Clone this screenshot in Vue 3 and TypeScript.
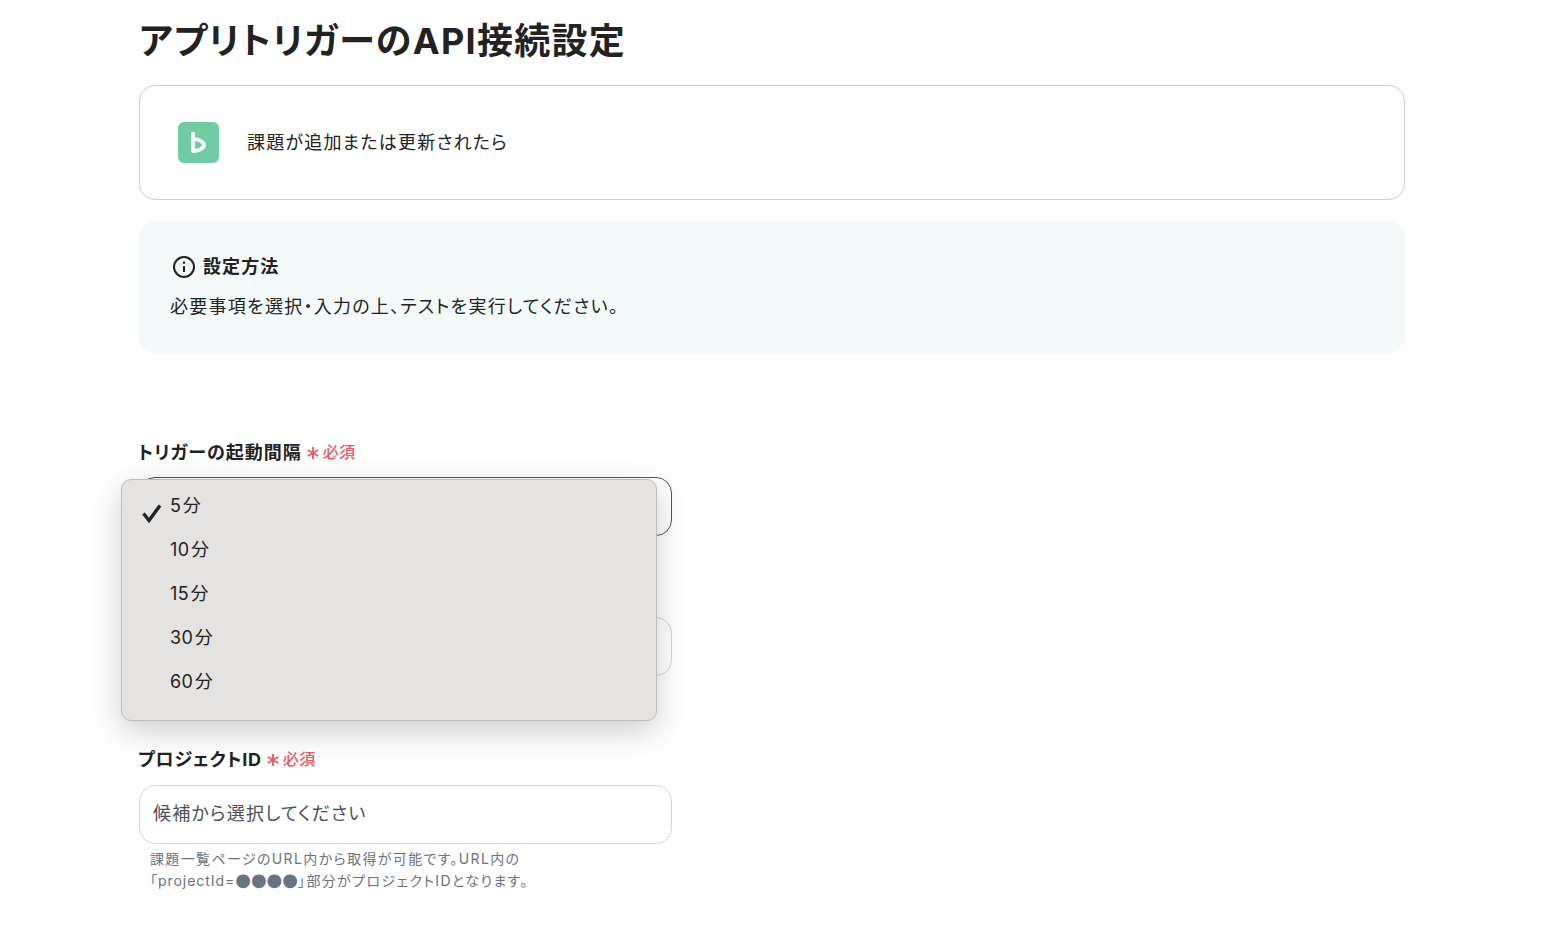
<script setup lang="ts">
const options: string[] = ['5 分', '10 分', '15 分', '30 分', '60 分']
</script>

<template>
  <main class="page">
    <h1 class="title">アプリトリガーのAPI接続設定</h1>

    <section class="app-card">
      <svg class="logo" viewBox="0 0 41 41" width="41" height="41" aria-hidden="true">
        <rect width="41" height="41" rx="6" fill="#6fcca3" />
        <path d="M15 10V29C20.5 29 25.5 26.5 26 23 25.5 19.5 20.5 17 15 17" fill="none" stroke="#fff" stroke-width="3.8" stroke-linejoin="round" />
      </svg>
      <span class="app-text">課題が追加または更新されたら</span>
    </section>

    <section class="note">
      <div class="note-head">
        <svg viewBox="0 0 24 24" width="24" height="24" fill="none" aria-hidden="true">
          <circle cx="12" cy="12" r="10" stroke="#222" stroke-width="2" />
          <path d="M12 11v6" stroke="#222" stroke-width="2" />
          <circle cx="12" cy="7.8" r="1.2" fill="#222" />
        </svg>
        <strong>設定方法</strong>
      </div>
      <p class="note-body">必要事項を選択・入力の上、テストを実行してください。</p>
    </section>

    <div class="field first">
      <label class="label">トリガーの起動間隔<span class="req"><svg viewBox="0 0 14 14" width="14" height="14" aria-hidden="true"><path d="M7 1v12M1.8 4 12.2 10M12.2 4 1.8 10" stroke="#ef5a64" stroke-width="1.9" /></svg>必須</span></label>
      <div class="dropdown-wrap">
        <div class="input focused"></div>
        <ul class="menu">
          <li v-for="(opt, i) in options" :key="opt">
            <svg v-if="i === 0" class="check" viewBox="0 0 22 22" width="22" height="22" aria-hidden="true">
              <path d="M2.5 11.5 8 18.5 19 3.5" fill="none" stroke="#222" stroke-width="3.4" />
            </svg>
            {{ opt }}
          </li>
        </ul>
      </div>
    </div>

    <div class="field second">
      <label class="label">&nbsp;</label>
      <div class="input"></div>
    </div>

    <div class="field third">
      <label class="label">プロジェクトID<span class="req"><svg viewBox="0 0 14 14" width="14" height="14" aria-hidden="true"><path d="M7 1v12M1.8 4 12.2 10M12.2 4 1.8 10" stroke="#ef5a64" stroke-width="1.9" /></svg>必須</span></label>
      <div class="input"><span class="placeholder">候補から選択してください</span></div>
      <p class="hint">課題一覧ページのURL内から取得が可能です。URL内の<br /><span class="code">「projectId=</span><span class="dots">●●●●</span>」部分がプロジェクトIDとなります。</p>
    </div>
  </main>
</template>

<style scoped>
.page {
  width: 1266px;
  margin-left: 139px;
  padding-top: 15px;
  color: #222;
  font-family: Inter, "Noto Sans CJK JP", sans-serif;
  font-feature-settings: "palt";
}
.title {
  margin: 0;
  font-size: 36px;
  line-height: 52px;
  font-weight: 700;
  letter-spacing: 1.3px;
}
.app-card {
  box-sizing: border-box;
  height: 115px;
  margin-top: 18px;
  padding-left: 38px;
  display: flex;
  align-items: center;
  gap: 28px;
  border: 1px solid #ccc;
  border-radius: 16px;
}
.logo { flex: none; }
.app-text {
  font-size: 18px;
  letter-spacing: 1.2px;
  margin-bottom: 4px;
}
.note {
  box-sizing: border-box;
  height: 132px;
  margin-top: 21px;
  padding: 32px 31px 0;
  background: #f4f9f9;
  border-radius: 16px;
}
.note-head {
  display: flex;
  align-items: center;
  gap: 7px;
  height: 28px;
  padding-left: 2px;
  font-size: 18px;
}
.note-head strong {
  font-weight: 700;
  letter-spacing: 1.1px;
  margin-bottom: 4px;
}
.note-body {
  margin: 12px 0 0;
  font-size: 18px;
  line-height: 28px;
  letter-spacing: 1.26px;
}
.field.first { margin-top: 84px; }
.field.second { margin-top: 41px; }
.field.third { margin-top: 68px; }
.label {
  display: flex;
  align-items: center;
  height: 28px;
  margin-left: -1px;
  margin-bottom: 12px;
  font-size: 18px;
  font-weight: 700;
  letter-spacing: 1px;
}
.third .label {
  margin-bottom: 13px;
  letter-spacing: 0.75px;
}
.req {
  display: inline-flex;
  align-items: center;
  gap: 3px;
  margin-left: 4px;
  color: #ef5a64;
  font-size: 16px;
  font-weight: 500;
  letter-spacing: 0.5px;
}
.req svg { margin-top: 3px; }
.input {
  box-sizing: border-box;
  width: 533px;
  height: 59px;
  padding: 0 13px;
  display: flex;
  align-items: center;
  border: 1px solid #d1d5db;
  border-radius: 16px;
  background: #fff;
  color: #4b4f55;
  font-size: 18px;
  letter-spacing: 1.17px;
}
.placeholder { margin-bottom: 6px; }
.input.focused { border-color: #555; }
.dropdown-wrap { position: relative; }
.menu {
  position: absolute;
  left: -18px;
  top: 2px;
  box-sizing: border-box;
  width: 536px;
  height: 242px;
  margin: 0;
  padding: 4px 0 0;
  list-style: none;
  background: #e4e3e1;
  border: 1px solid #bdbcba;
  border-radius: 10px;
  box-shadow: 0 10px 32px rgba(0, 0, 0, 0.2);
}
.menu li {
  position: relative;
  height: 44px;
  padding-left: 48px;
  font-size: 18px;
  line-height: 44px;
  letter-spacing: 0.4px;
  word-spacing: -4px;
}
.check {
  position: absolute;
  left: 19px;
  top: 18px;
}
.hint {
  margin: 4px 0 0 11px;
  color: #6b7280;
  font-size: 14px;
  line-height: 22px;
  letter-spacing: 1.36px;
}
.code { letter-spacing: 0.95px; }
.dots {
  font-family: "DejaVu Sans", sans-serif;
  letter-spacing: 0;
  font-size: 18px;
  line-height: 1;
}
</style>

<style>
html, body { background: #fff; overflow: hidden; }
</style>
